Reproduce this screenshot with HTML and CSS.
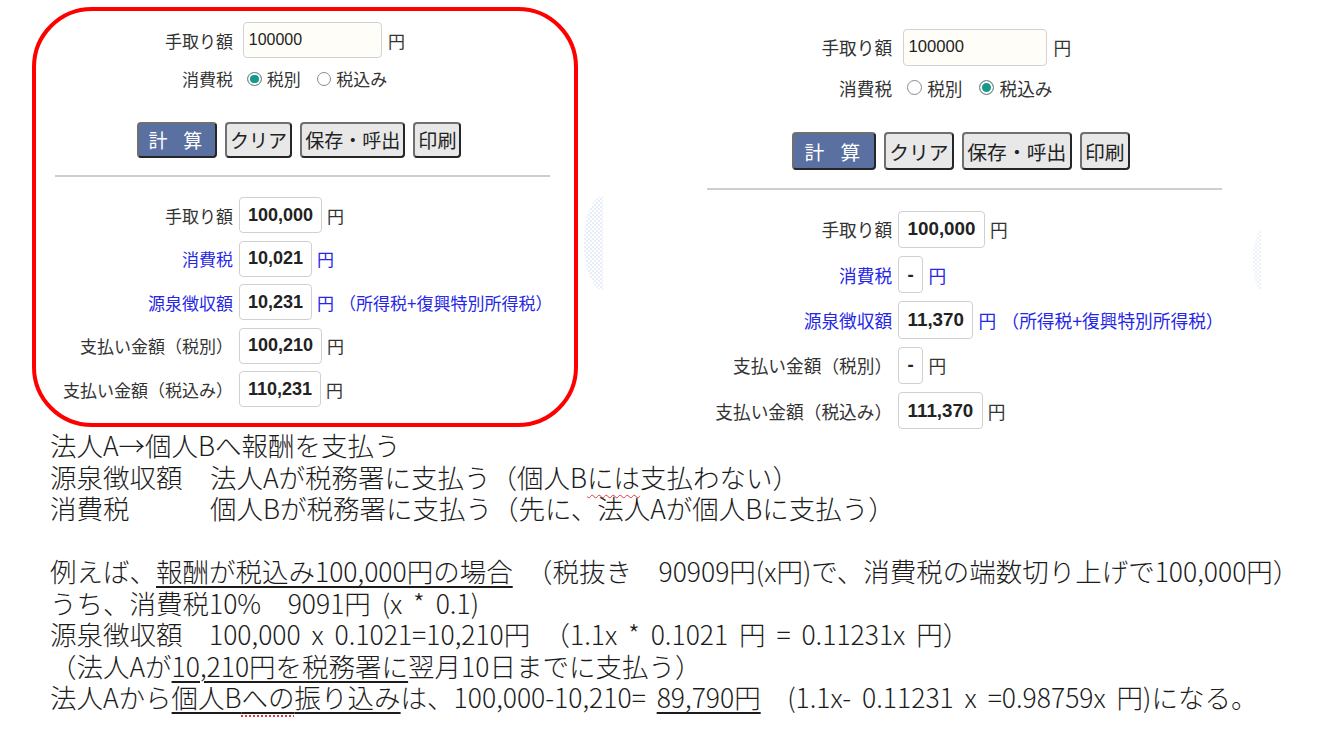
FILE: index.html
```html
<!DOCTYPE html>
<html lang="ja">
<head>
<meta charset="utf-8">
<title>報酬の源泉徴収額</title>
<link rel="stylesheet" href="styles.css">
</head>
<body>
<div class="shots">
  <div class="calc framed">
    <div class="field">
      <label class="name" for="amount1">手取り額</label>
      <input type="text" id="amount1" class="amount" value="100000">
      <span class="unit">円</span>
    </div>
    <div class="field tax">
      <span class="name">消費税</span>
      <label class="choice"><input type="radio" name="tax1" checked>税別</label>
      <label class="choice"><input type="radio" name="tax1">税込み</label>
    </div>
    <div class="buttons">
      <button type="button" class="btn primary">計 算</button>
      <button type="button" class="btn">クリア</button>
      <button type="button" class="btn">保存・呼出</button>
      <button type="button" class="btn">印刷</button>
    </div>
    <hr class="rule">
    <div class="result"><span class="name">手取り額</span><span class="value">100,000</span><span class="unit">円</span></div>
    <div class="result blue"><span class="name">消費税</span><span class="value">10,021</span><span class="unit">円</span></div>
    <div class="result blue"><span class="name">源泉徴収額</span><span class="value">10,231</span><span class="unit">円</span><span class="note">（所得税+復興特別所得税）</span></div>
    <div class="result"><span class="name">支払い金額（税別）</span><span class="value">100,210</span><span class="unit">円</span></div>
    <div class="result"><span class="name">支払い金額（税込み）</span><span class="value">110,231</span><span class="unit">円</span></div>
    <span class="ghost"></span>
  </div>

  <div class="calc plain">
    <div class="field">
      <label class="name" for="amount2">手取り額</label>
      <input type="text" id="amount2" class="amount" value="100000">
      <span class="unit">円</span>
    </div>
    <div class="field tax">
      <span class="name">消費税</span>
      <label class="choice"><input type="radio" name="tax2">税別</label>
      <label class="choice"><input type="radio" name="tax2" checked>税込み</label>
    </div>
    <div class="buttons">
      <button type="button" class="btn primary">計 算</button>
      <button type="button" class="btn">クリア</button>
      <button type="button" class="btn">保存・呼出</button>
      <button type="button" class="btn">印刷</button>
    </div>
    <hr class="rule">
    <div class="result"><span class="name">手取り額</span><span class="value">100,000</span><span class="unit">円</span></div>
    <div class="result blue"><span class="name">消費税</span><span class="value">-</span><span class="unit">円</span></div>
    <div class="result blue"><span class="name">源泉徴収額</span><span class="value">11,370</span><span class="unit">円</span><span class="note">（所得税+復興特別所得税）</span></div>
    <div class="result"><span class="name">支払い金額（税別）</span><span class="value">-</span><span class="unit">円</span></div>
    <div class="result"><span class="name">支払い金額（税込み）</span><span class="value">111,370</span><span class="unit">円</span></div>
    <span class="ghost thin"></span>
  </div>
</div>

<div class="notes">
  <p>法人A→個人Bへ報酬を支払う</p>
  <p><span class="lead">源泉徴収額</span>法人Aが税務署に支払う（個人B<span class="typo">には</span>支払わない）</p>
  <p><span class="lead">消費税</span>個人Bが税務署に支払う（先に、法人Aが個人Bに支払う）</p>
  <p>&nbsp;</p>
  <p>例えば、<span class="mark">報酬が税込み100,000円の場合</span>　（税抜き　90909円(x円)で、消費税の端数切り上げで100,000円）</p>
  <p>うち、消費税10%　9091円 (x * 0.1)</p>
  <p>源泉徴収額　100,000 x 0.1021=10,210円　（1.1x * 0.1021 円 = 0.11231x 円）</p>
  <p>（法人Aが<span class="mark">10,210円を税務署に</span>翌月10日までに支払う）</p>
  <p>法人Aから<span class="mark">個人B<span class="dots">への</span>振り込み</span>は、100,000-10,210= <span class="mark">89,790円</span>　(1.1x- 0.11231 x =0.98759x 円)になる。</p>
</div>
</body>
</html>
```

FILE: styles.css
```css
html, body {
    margin: 0;
    padding: 0;
    background: #ffffff;
}

body {
    width: 1334px;
    height: 732px;
    overflow: hidden;
    font-family: "Noto Sans CJK JP", "Liberation Sans", sans-serif;
    color: #333333;
}

/* two calculator screenshots side by side */
.shots {
    display: flex;
    align-items: flex-start;
    gap: 105px;
    padding: 7px 0 0 32px;
}

.calc {
    position: relative;
    width: 29.12em;
    font-size: 17px;
    padding: 0.65em 1.41em 0.94em 1.12em;
    border: 4px solid transparent;
    border-radius: 60px;
}

.calc.framed {
    border-color: #ff0000;
}

.calc.plain {
    font-size: 17.7px;
    margin-top: 6px;
    padding-bottom: 0;
    border-bottom: 0;
}

.field, .result {
    display: flex;
    align-items: center;
}

.name {
    width: 10.47em;
    flex-shrink: 0;
    text-align: right;
    white-space: nowrap;
}

.field .name {
    margin-right: 0.59em;
}

.result .name {
    margin-right: 0.35em;
}

.amount {
    box-sizing: border-box;
    width: 8.7em;
    height: 2.25em;
    margin: 0;
    padding: 0 0.3em;
    font-family: "Liberation Sans", sans-serif;
    font-size: 0.94em;
    color: #222222;
    background: #fffdf8;
    border: 1px solid #d2d2d2;
    border-radius: 4px;
    outline: none;
}

.unit {
    margin-left: 0.3em;
}

.field .unit {
    margin-left: 0.35em;
}

.tax {
    height: 1.41em;
    margin-top: 0.53em;
}

.choice {
    display: inline-flex;
    align-items: center;
}

.choice + .choice {
    margin-left: 0.7em;
}

.choice input {
    appearance: none;
    -webkit-appearance: none;
    box-sizing: border-box;
    font-size: inherit;
    width: 0.85em;
    height: 0.85em;
    margin: 0 0.3em 0 0.24em;
    border: 1px solid #8a8a8a;
    border-radius: 50%;
    background: #ffffff;
}

.choice input:checked {
    background: #14998c;
    box-shadow: inset 0 0 0 2px #ffffff;
}

.buttons {
    display: flex;
    justify-content: center;
    gap: 0.47em;
    margin: 1.82em 0.4em 0 0;
}

.btn {
    box-sizing: border-box;
    height: 1.9em;
    margin: 0;
    padding: 0 0.16em;
    font-family: inherit;
    font-size: 1.12em;
    color: #222222;
    background: #e8e8e8;
    border: 2px solid;
    border-color: #707070 #262626 #262626 #707070;
    border-radius: 4px;
}

.btn.primary {
    width: 4.21em;
    padding-left: 0.3em;
    letter-spacing: 0.3em;
    color: #ffffff;
    background: #5a70a0;
}

.rule {
    height: 0;
    margin: 1em 0 1.18em;
    border: 0;
    border-top: 2px solid #cecece;
}

.result {
    height: 2.12em;
}

.result + .result {
    margin-top: 0.44em;
}

.value {
    box-sizing: border-box;
    display: flex;
    align-items: center;
    height: 2em;
    padding: 0 0.44em;
    font-family: "Liberation Sans", sans-serif;
    font-size: 1.06em;
    font-weight: bold;
    color: #222222;
    background: #ffffff;
    border: 1px solid #d0d0d0;
    border-radius: 4px;
}

.result.blue .name,
.result.blue .unit,
.note {
    color: #2626e6;
}

.note {
    margin-left: 0.3em;
    white-space: nowrap;
}

/* faint dotted shapes left over from the capture */
.ghost {
    position: absolute;
    top: 10.9em;
    right: -1.7em;
    width: 1.12em;
    height: 5.5em;
    border-radius: 100% 0 0 100% / 50% 0 0 50%;
    background: repeating-conic-gradient(#dce6f7 0 25%, #ffffff 0 50%) 0 0 / 4px 4px;
    opacity: 0.65;
}

.ghost.thin {
    top: 12.1em;
    right: -0.8em;
    width: 0.45em;
    height: 3.3em;
    opacity: 0.5;
}

/* explanation below the screenshots */
.notes {
    margin-top: 0;
    padding-left: 50px;
    font-size: 26.5px;
    font-weight: 300;
    line-height: 31.5px;
    word-spacing: 5px;
    color: #1c1c1c;
}

.notes p {
    margin: 0;
    white-space: nowrap;
}

.lead {
    display: inline-block;
    width: 160px;
}

.mark {
    text-decoration: underline;
    text-decoration-thickness: 1.5px;
    text-underline-offset: 4px;
}

.typo {
    text-decoration: underline wavy #e03a3a;
    text-decoration-thickness: 1px;
    text-underline-offset: 6px;
}

.dots {
    text-decoration: underline dotted #e03a3a;
    text-decoration-thickness: 2px;
    text-underline-offset: 7px;
}
```
